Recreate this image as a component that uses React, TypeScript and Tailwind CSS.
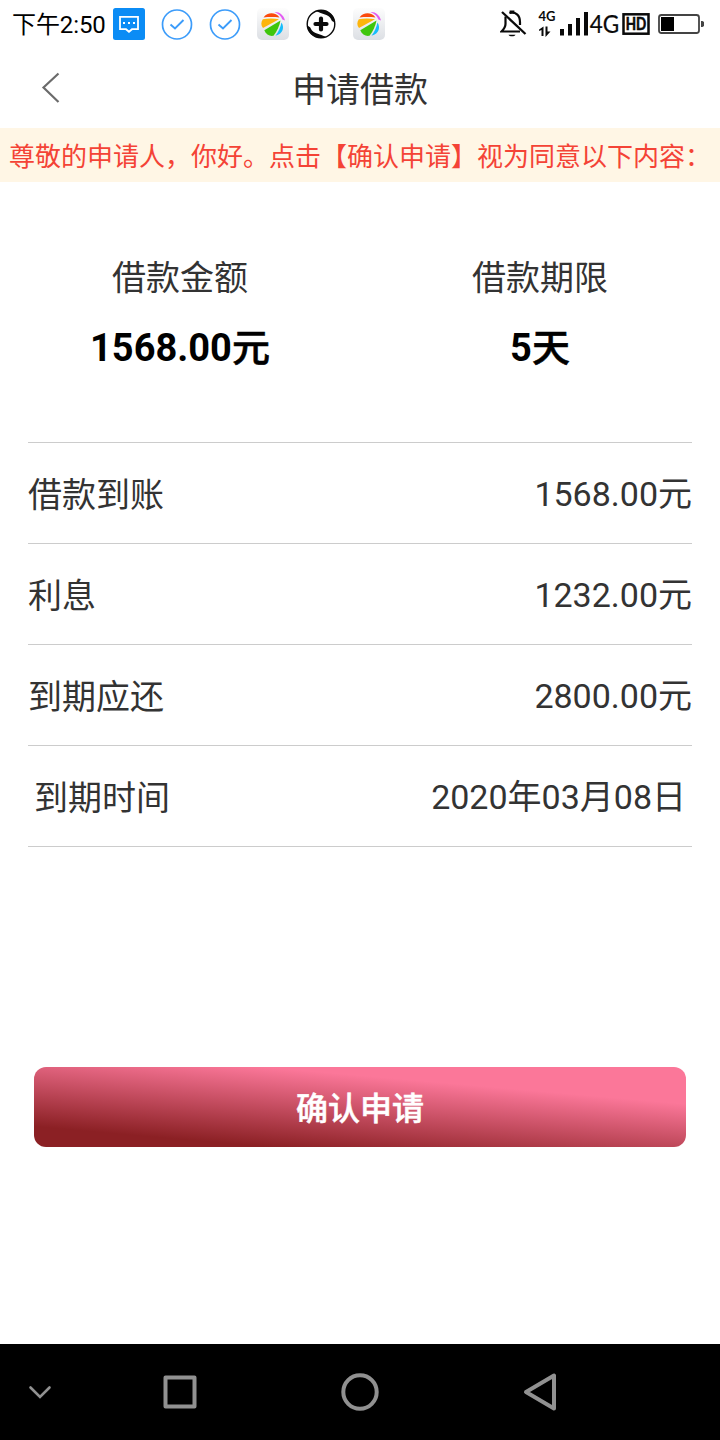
const stats = [
  { label: '借款金额', value: '1568.00', unit: '元' },
  { label: '借款期限', value: '5', unit: '天' },
];

const rows = [
  { label: '借款到账', value: '1568.00元' },
  { label: '利息', value: '1232.00元' },
  { label: '到期应还', value: '2800.00元' },
  { label: '到期时间', value: '2020年03月08日', inset: true },
];

function MessageIcon() {
  return (
    <svg viewBox="0 0 32 32" className="h-8 w-8 shrink-0">
      <rect width="32" height="32" rx="2.500" fill="#0b8cf5" />
      <path d="M7 8.800h18v12.400h-6l-3 2.600-3-2.600H7z" fill="none" stroke="#fff" strokeWidth="1.800" />
      <path d="M10 14h2v2h-2zM15 14h2v2h-2zM20 14h2v2h-2z" fill="#fff" />
    </svg>
  );
}

function CheckIcon() {
  return (
    <svg viewBox="0 0 32 32" className="h-8 w-8 shrink-0" fill="none" stroke="#3c9cfa">
      <circle cx="16" cy="16.500" r="14.500" strokeWidth="1.700" />
      <path d="M9.500 16.500l4.500 4 8.500-8.500" strokeWidth="1.900" />
    </svg>
  );
}

function FanIcon() {
  return (
    <svg viewBox="0 0 32 32" className="h-8 w-8 shrink-0">
      <defs>
        <linearGradient id="fan" x1="0" y1="0" x2="0" y2="1">
          <stop offset="0" stopColor="#fdfdfd" />
          <stop offset="1" stopColor="#dcdfe4" />
        </linearGradient>
      </defs>
      <rect width="32" height="32" rx="5" fill="url(#fan)" />
      <path d="M6.500 9.500C8.500 6.500 11.500 5.200 14.500 5.200c3 0 6 1.300 8 4.300-5-.6-11-.6-16 0z" fill="#fb4a0c" />
      <path d="M5.800 11.200c5-.9 11-.9 16.200 0L6 20C3.800 17.500 3.800 14 5.800 11.200z" fill="#fdb50c" />
      <path d="M23.500 12.500C22.500 18 20 23.500 16.500 27.800 12.500 28.500 9 26.500 7.300 22.200z" fill="#3fc60c" />
      <path d="M24.500 14.500c3 4.500 2 11-6 13.300 3-4 5-8.500 6-13.300z" fill="#16bdfb" />
      <path d="M17.500 4c4.500-.5 9 2.500 10.500 8.500l-2.600-1C24 7.800 21.500 6 17.500 4z" fill="#e35cf2" />
    </svg>
  );
}

function PlusIcon() {
  return (
    <svg viewBox="0 0 32 32" className="h-8 w-8 shrink-0">
      <circle cx="16" cy="16" r="13.800" fill="#fff" stroke="#0a0a0a" strokeWidth="1.400" />
      <path d="M11 3C20 -.5 30 6 30 15c-1-1.500-3.500-1.500-4-4C24 6.500 17 6 11 3z" fill="#0a0a0a" />
      <path d="M21 29C12 32.500 2 26 2 17c1 1.500 3.500 1.500 4 4 2 4.500 9 5 15 8z" fill="#0a0a0a" />
      <path d="M16 10.500v11M10.500 16h11" stroke="#0a0a0a" strokeWidth="4.200" strokeLinecap="round" />
    </svg>
  );
}

function SystemIcons() {
  return (
    <svg viewBox="0 0 220 48" className="ml-auto h-12 w-[220px] shrink-0" fill="none" stroke="#0a0a0a">
      {/* Muted bell */}
      <path d="M5.500 16.500V24c0 3-1.500 5-4 7.500h18.500" strokeWidth="2.200" />
      <path d="M9.500 13c6-1.500 10.500 2 10.500 9v3" strokeWidth="2.200" />
      <path d="M10.500 13.500v-2.200h3v2.200" strokeWidth="1.800" />
      <path d="M2 12l23.500 22" strokeWidth="2.300" />
      <path d="M8.500 34.800h7c-1 2-6 2-7 0z" fill="#0a0a0a" stroke="none" />
      {/* Mobile data */}
      <g fill="#0a0a0a" stroke="none" fontFamily="Lato, sans-serif">
        <text x="38.500" y="21.300" fontSize="12.500" fontWeight="700" textLength="17" lengthAdjust="spacingAndGlyphs">4G</text>
        <path d="M43.500 26.500v9.500h-2v-6l-2.400 1v-1.500zM45.500 26.500h2v5h3L45.500 37z" />
        <path d="M60 29h4v6.500h-4zM68 24h4v11.500h-4zM76 18h4v17.500h-4zM84 12h4v23.500h-4z" />
        <text x="89.800" y="33" fontSize="24.500" textLength="29.500" lengthAdjust="spacingAndGlyphs" stroke="#0a0a0a" strokeWidth=".2">4G</text>
        <text x="125.800" y="29.800" fontSize="16.500" fontWeight="700" textLength="20.500" lengthAdjust="spacingAndGlyphs" stroke="#0a0a0a" strokeWidth=".6">HD</text>
      </g>
      <rect x="123.500" y="14.300" width="25" height="19.400" strokeWidth="2.500" />
      {/* Battery */}
      <rect x="159" y="15" width="40" height="18" rx="2.500" stroke="#444" strokeWidth="1.800" />
      <path d="M161 17h13v14h-13z" fill="#000" stroke="none" />
      <path d="M201 21h1.500l1.500 1v4l-1.500 1H201z" fill="#444" stroke="none" />
    </svg>
  );
}

function StatusBar() {
  return (
    <div className="flex h-12 items-center pl-3">
      <span className="w-[101px] shrink-0 whitespace-nowrap pt-px text-2xl leading-[48px] tracking-[-0.1px] text-black">
        下午2:50
      </span>
      <div className="flex gap-4">
        <MessageIcon />
        <CheckIcon />
        <CheckIcon />
        <FanIcon />
        <PlusIcon />
        <FanIcon />
      </div>
      <SystemIcons />
    </div>
  );
}

function NavBar() {
  return (
    <nav className="mt-auto h-24 bg-black">
      <svg viewBox="0 0 720 96" className="h-24 w-full" fill="none" stroke="#919191" strokeWidth="4" strokeLinejoin="round">
        <path d="M30.500 43.500l9.500 9.500 9.500-9.500" strokeWidth="2.600" strokeLinejoin="miter" strokeLinecap="round" />
        <rect x="165.500" y="33.500" width="29" height="29" />
        <circle cx="360" cy="48" r="16.700" />
        <path d="M554 31.500v33L526 48z" />
      </svg>
    </nav>
  );
}

export default function App() {
  return (
    <div className="flex h-[1440px] w-[720px] flex-col overflow-hidden bg-white font-[Roboto,'Noto_Sans_CJK_SC',sans-serif] text-[34px] text-[#333]">
      <StatusBar />

      <header className="grid h-20 grid-cols-[100px_1fr_100px] items-start">
        <svg viewBox="0 0 100 80" className="h-20 w-[100px]" fill="none" stroke="#6b6b6b" strokeWidth="2.200">
          <path d="M58.500 25.500L43.500 39.500l15 14.500" />
        </svg>
        <h1 className="text-center leading-[84px]">申请借款</h1>
      </header>

      <p className="h-[54px] whitespace-nowrap bg-[#fff6e5] pl-[9px] text-[26px] leading-[58px] text-[#f44336]">
        尊敬的申请人，你好。点击【确认申请】视为同意以下内容：
      </p>

      <section className="grid h-[260px] grid-cols-2 content-start pt-[71px] text-center">
        {stats.map((stat) => (
          <div key={stat.label}>
            <div className="leading-[50px]">{stat.label}</div>
            <div className="mt-4 text-[38px] leading-[58px] font-bold text-black">
              {stat.value}
              <span className="font-medium [-webkit-text-stroke:0.6px_currentColor]">{stat.unit}</span>
            </div>
          </div>
        ))}
      </section>

      <ul className="mx-7 border-t border-[#ccc]">
        {rows.map((row) => (
          <li
            key={row.label}
            className={`flex h-[101px] justify-between border-b border-[#ccc] ${row.inset ? 'px-1.5' : ''}`}
          >
            <span className="leading-[104px]">{row.label}</span>
            <span className="leading-[102px]">{row.value}</span>
          </li>
        ))}
      </ul>

      <button className="mx-[34px] mt-[220px] h-20 rounded-xl bg-[linear-gradient(5deg,#8b2024_15%,#fb7799_73%)] pt-1 text-[32px] leading-[76px] font-medium text-white [-webkit-text-stroke:0.5px_currentColor]">
        确认申请
      </button>

      <NavBar />
    </div>
  );
}
